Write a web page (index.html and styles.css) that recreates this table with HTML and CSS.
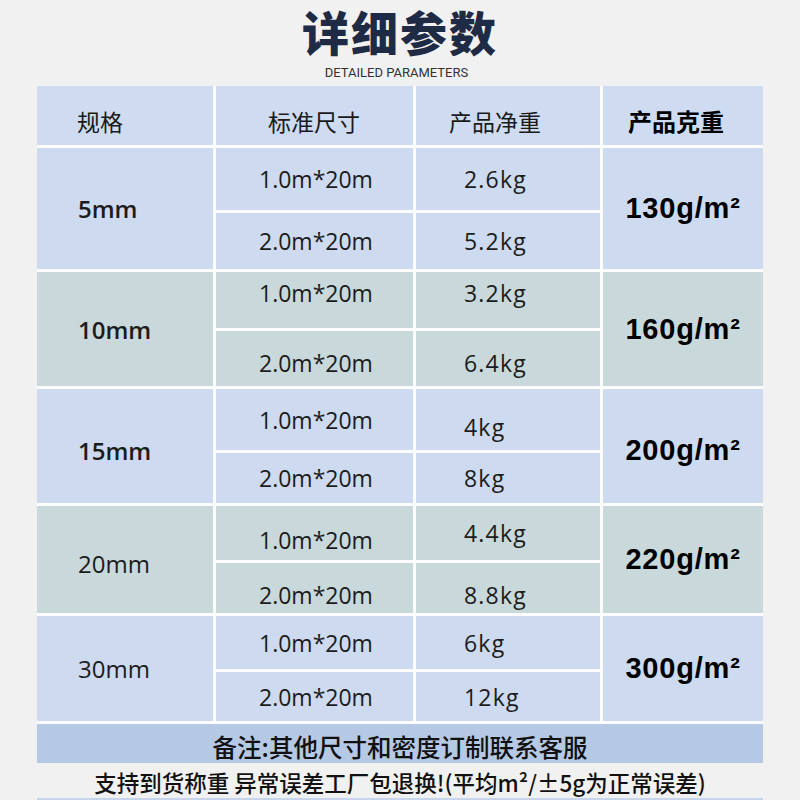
FILE: index.html
```html
<!DOCTYPE html>
<html lang="zh-CN">
<head>
<meta charset="utf-8">
<title>详细参数</title>
<link rel="stylesheet" href="styles.css">
</head>
<body>
<div class="page">
  <h1 class="title">详细参数</h1>
  <div class="subtitle">DETAILED PARAMETERS</div>
  <div class="table">
    <div class="head">
      <div class="hc hc1">规格</div>
      <div class="hc hc2">标准尺寸</div>
      <div class="hc hc3">产品净重</div>
      <div class="hc hc4">产品克重</div>
    </div>

    <div class="grp g1 blue">
      <div class="cell spec bold">5mm</div>
      <div class="cell size">1.0m*20m</div>
      <div class="cell wt">2.6kg</div>
      <div class="cell gsm">130g/m²</div>
      <div class="cell size">2.0m*20m</div>
      <div class="cell wt">5.2kg</div>
    </div>

    <div class="grp g2 green">
      <div class="cell spec bold">10mm</div>
      <div class="cell size up">1.0m*20m</div>
      <div class="cell wt up">3.2kg</div>
      <div class="cell gsm">160g/m²</div>
      <div class="cell size dn">2.0m*20m</div>
      <div class="cell wt dn">6.4kg</div>
    </div>

    <div class="grp g3 blue">
      <div class="cell spec bold dn">15mm</div>
      <div class="cell size">1.0m*20m</div>
      <div class="cell wt dn2">4kg</div>
      <div class="cell gsm dn">200g/m²</div>
      <div class="cell size">2.0m*20m</div>
      <div class="cell wt">8kg</div>
    </div>

    <div class="grp g4 green">
      <div class="cell spec dn">20mm</div>
      <div class="cell size dn2">1.0m*20m</div>
      <div class="cell wt">4.4kg</div>
      <div class="cell gsm">220g/m²</div>
      <div class="cell size dn2">2.0m*20m</div>
      <div class="cell wt dn2">8.8kg</div>
    </div>

    <div class="grp g5 blue">
      <div class="cell spec">30mm</div>
      <div class="cell size">1.0m*20m</div>
      <div class="cell wt">6kg</div>
      <div class="cell gsm">300g/m²</div>
      <div class="cell size">2.0m*20m</div>
      <div class="cell wt">12kg</div>
    </div>

    <div class="note">备注:其他尺寸和密度订制联系客服</div>
  </div>
  <div class="foot">支持到货称重 异常误差工厂包退换!(平均m²/±5g为正常误差)</div>
  <div class="foot-line"></div>
</div>
</body>
</html>
```

FILE: styles.css
```css
html, body {
  margin: 0;
  padding: 0;
}
body {
  background: #f1f1f1;
  font-family: "Noto Sans CJK SC", "Noto Sans", sans-serif;
  color: #151515;
}
.page {
  width: 800px;
  height: 800px;
  overflow: hidden;
}
.title {
  margin: 0;
  height: 62px;
  line-height: 62px;
  text-align: center;
  font-size: 47px;
  font-weight: 900;
  color: #1f2b45;
  letter-spacing: 2px;
}
.subtitle {
  margin-top: 5px;
  height: 12px;
  line-height: 12px;
  text-align: center;
  padding-right: 7px;
  font-family: "Roboto", "Liberation Sans", sans-serif;
  font-size: 13px;
  color: #333;
}
.table {
  margin: 7px 0 0 37px;
  width: 726px;
  background: #fdfdfd;
  display: flex;
  flex-direction: column;
  row-gap: 3px;
}
.head, .grp {
  display: grid;
  grid-template-columns: 176px 197px 184px 160px;
  column-gap: 3px;
}
.head {
  height: 59px;
}
.hc {
  background: #cedbf0;
  display: flex;
  align-items: center;
  padding-top: 10px;
  box-sizing: border-box;
  font-size: 23px;
  color: #1a1a1a;
}
.hc1 { padding-left: 40px; }
.hc2 { padding-left: 52px; }
.hc3 { padding-left: 33px; }
.hc4 { padding-left: 25px; font-weight: 700; font-size: 24px; color: #000; }

.grp { row-gap: 3px; }
.g1 { grid-template-rows: 62px 56px; }
.g2 { grid-template-rows: 56px 55px; }
.g3 { grid-template-rows: 61px 50px; }
.g4 { grid-template-rows: 54px 50px; }
.g5 { grid-template-rows: 53px 49px; }

.blue .cell { background: #cddaef; }
.green .cell { background: #c9d8db; }

.cell {
  display: flex;
  align-items: center;
  box-sizing: border-box;
  font-family: "Open Sans", "Noto Sans", sans-serif;
  font-size: 23px;
  color: #1c1c1c;
}
.spec {
  grid-row: span 2;
  padding-left: 41px;
  font-size: 24px;
}
.spec.bold { font-weight: 600; }
.size { padding-left: 43px; }
.wt { padding-left: 48px; letter-spacing: 1.2px; }
.gsm {
  grid-column: 4;
  grid-row: 1 / span 2;
  justify-content: center;
  font-family: "Liberation Sans", Arial, sans-serif;
  font-weight: 700;
  font-size: 29px;
  letter-spacing: 0.8px;
  color: #000;
}
.up { padding-bottom: 14px; }
.dn { padding-top: 8px; }
.dn2 { padding-top: 14px; }

.note {
  height: 39px;
  background: #b5c8e4;
  display: flex;
  align-items: center;
  justify-content: center;
  padding-top: 6px;
  box-sizing: border-box;
  font-size: 24.5px;
  font-weight: 500;
  color: #111;
}
.foot {
  height: 35px;
  line-height: 38px;
  text-align: center;
  font-size: 22.5px;
  font-weight: 500;
  color: #111;
}
.foot-line {
  margin-left: 37px;
  width: 726px;
  height: 3px;
  background: #c7d5ec;
}
```
